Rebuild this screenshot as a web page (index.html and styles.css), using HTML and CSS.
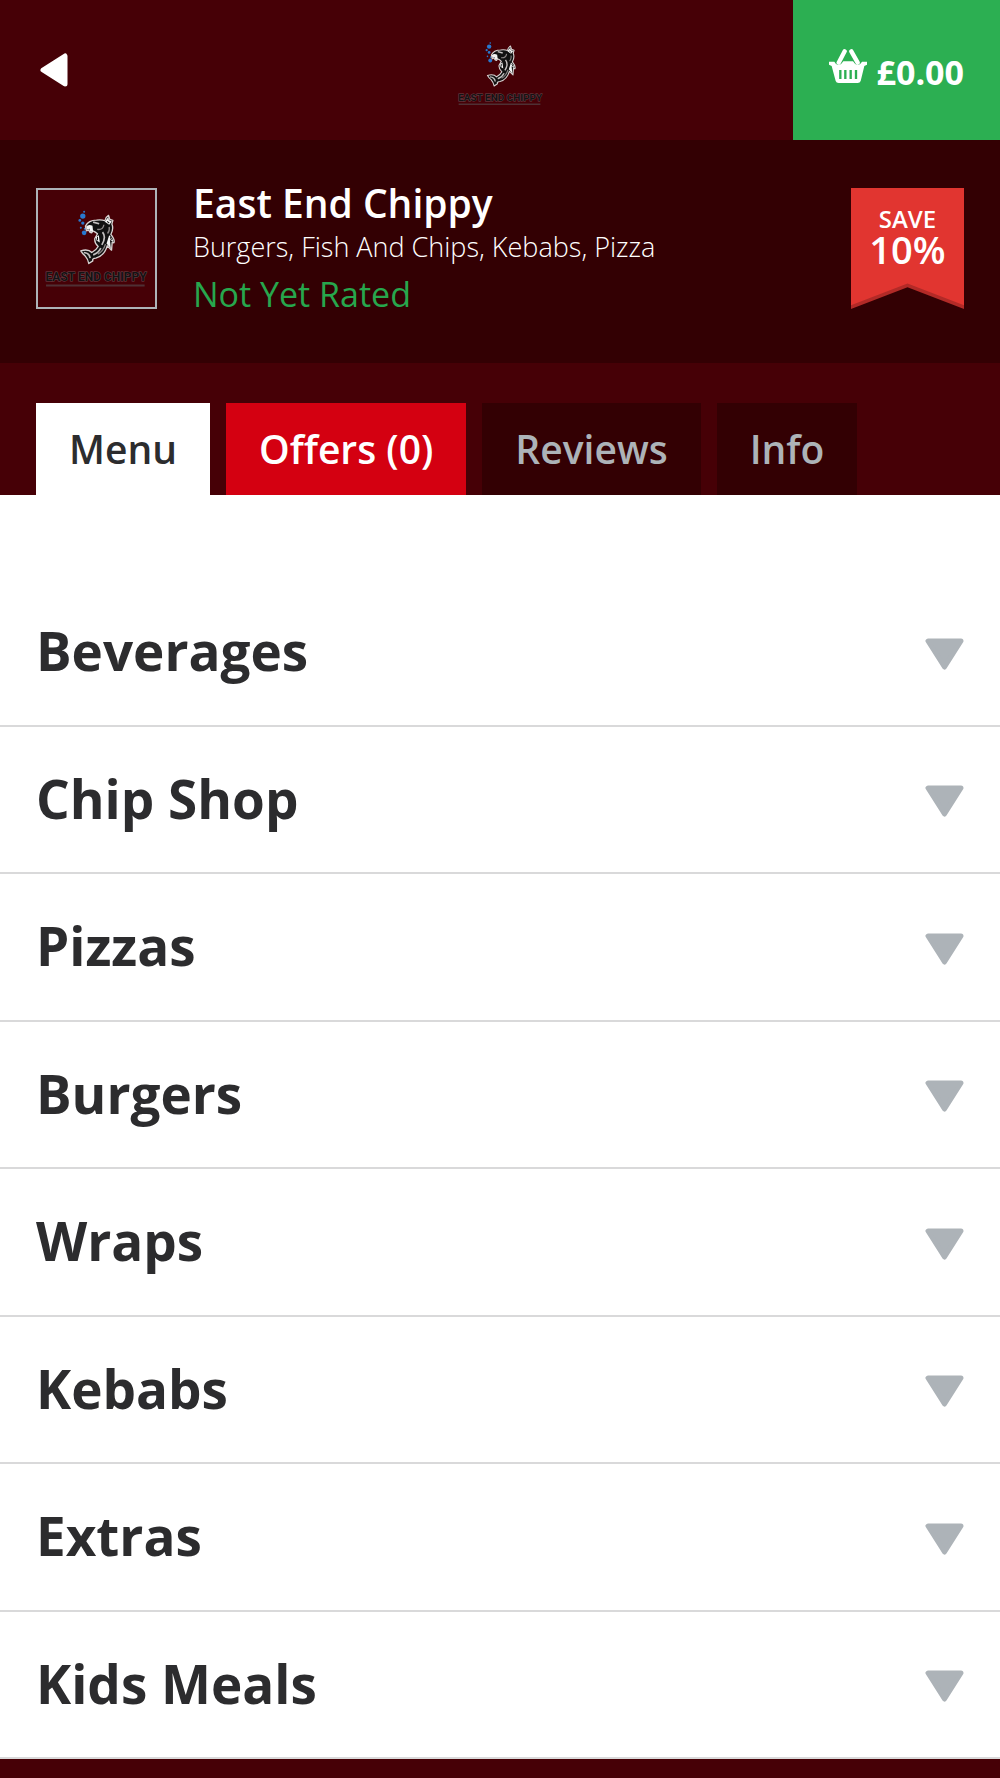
FILE: index.html
```html
<!DOCTYPE html>
<html lang="en">
<head>
    <meta charset="UTF-8">
    <meta name="viewport" content="width=device-width, initial-scale=1.0">
    <title>East End Chippy | Menu</title>
    <link rel="stylesheet" href="styles.css">
</head>
<body>
    <!-- shared shapes -->
    <svg class="sprite" aria-hidden="true">
        <symbol id="logo" viewBox="55 62 350 350">
            <g fill="#2878cf">
                <circle cx="193" cy="127" r="3"/>
                <circle cx="189" cy="140" r="8"/>
                <circle cx="180" cy="153" r="4"/>
                <circle cx="189" cy="161" r="5"/>
                <circle cx="183" cy="175" r="3"/>
                <circle cx="195" cy="178" r="3"/>
                <circle cx="193" cy="190" r="7"/>
            </g>
            <path fill="#111" stroke="#d8d2d2" stroke-width="4" stroke-linejoin="round" d="M197 170 Q206 152 230 152 Q246 150 255 154 Q257 143 266 138 L270 150 L279 153 L276 164 Q282 178 273 195 Q286 211 282 220 L277 218 L275 242 L262 229 Q254 258 228 266 Q216 267 219 274 L207 282 Q204 268 196 259 Q189 254 183 244 Q205 237 216 249 Q229 242 235 231 Q223 220 225 207 L233 193 Q227 187 219 184 L216 190 Q209 190 207 181 L200 184 Z"/>
            <path fill="#f4f4f4" d="M199 171 Q207 163 218 169 L220 186 L211 187 L209 178 L201 181 Z M255 157 Q260 149 266 143 L267 152 L276 156 L268 166 Z M228 202 L237 197 L240 219 L230 213 Z M268 197 Q282 211 279 217 L270 211 L273 238 L260 222 Z"/>
            <path fill="none" stroke="#c4c0c0" stroke-width="5" d="M220 158 L238 163 M248 188 Q260 203 246 226 M243 236 Q235 251 220 256 M192 249 Q209 250 211 266"/>
            <path fill="none" stroke="#8c8686" stroke-width="4" d="M232 180 Q250 182 252 166 M268 172 Q270 184 263 192 M257 224 Q250 246 234 254"/>
            <path fill="none" stroke="#111" stroke-width="3" d="M262 156 L268 161 M233 202 V212 M271 203 L275 212"/>
            <text class="logo-text" x="229" y="335" text-anchor="middle">EAST END CHIPPY</text>
            <path stroke="#4e3034" stroke-width="6" d="M79 348 H374"/>
        </symbol>
        <symbol id="arrow" viewBox="0 0 39 32">
            <path d="M3 3 H36 L19.5 29 Z" fill="currentColor" stroke="currentColor" stroke-width="5" stroke-linejoin="round"/>
        </symbol>
    </svg>

    <header class="topbar">
        <a class="back" href="#" aria-label="Back">
            <svg width="28" height="36" viewBox="0 0 28 36"><path d="M3 18 L25 4 V32 Z" fill="#fff" stroke="#fff" stroke-width="5" stroke-linejoin="round"/></svg>
        </a>
        <a class="brand" href="#" aria-label="East End Chippy home">
            <svg width="97" height="97"><use href="#logo"/></svg>
        </a>
        <button class="basket" type="button">
            <svg width="38" height="34" viewBox="0 0 114 102" aria-hidden="true">
                <path fill="#fff" d="M0 38 H16 Q24 54 37 44 L43 37 H72 L78 44 Q90 54 99 38 H114 V47 L106 51 L95 96 Q93 102 86 102 H29 Q22 102 20 96 L8 51 L0 47 Z"/>
                <path stroke="#fff" stroke-width="13" stroke-linecap="round" d="M47 7 L29 41 M67 7 L86 41"/>
                <path stroke="#2caf52" stroke-width="7" d="M34 63 V90 M49 63 V90 M65 63 V90 M81 63 V90"/>
            </svg>
            <span>£0.00</span>
        </button>
    </header>

    <section class="restaurant">
        <div class="thumb">
            <svg width="117" height="117" role="img" aria-label="East End Chippy logo"><use href="#logo"/></svg>
        </div>
        <div class="details">
            <h1>East End Chippy</h1>
            <p class="cuisines">Burgers, Fish And Chips, Kebabs, Pizza</p>
            <p class="rating">Not Yet Rated</p>
        </div>
        <div class="ribbon">
            <span class="ribbon-label">SAVE</span>
            <span class="ribbon-value">10%</span>
        </div>
    </section>

    <nav class="tabs">
        <a class="tab active" href="#menu">Menu</a>
        <a class="tab offers" href="#offers">Offers (0)</a>
        <a class="tab" href="#reviews">Reviews</a>
        <a class="tab" href="#info">Info</a>
    </nav>

    <main id="menu">
        <ul class="categories">
            <li><button type="button" aria-expanded="false">Beverages <svg width="39" height="32"><use href="#arrow"/></svg></button></li>
            <li><button type="button" aria-expanded="false">Chip Shop <svg width="39" height="32"><use href="#arrow"/></svg></button></li>
            <li><button type="button" aria-expanded="false">Pizzas <svg width="39" height="32"><use href="#arrow"/></svg></button></li>
            <li><button type="button" aria-expanded="false">Burgers <svg width="39" height="32"><use href="#arrow"/></svg></button></li>
            <li><button type="button" aria-expanded="false">Wraps <svg width="39" height="32"><use href="#arrow"/></svg></button></li>
            <li><button type="button" aria-expanded="false">Kebabs <svg width="39" height="32"><use href="#arrow"/></svg></button></li>
            <li><button type="button" aria-expanded="false">Extras <svg width="39" height="32"><use href="#arrow"/></svg></button></li>
            <li><button type="button" aria-expanded="false">Kids Meals <svg width="39" height="32"><use href="#arrow"/></svg></button></li>
        </ul>
    </main>
</body>
</html>
```
FILE: styles.css
```css
* {
    box-sizing: border-box;
    margin: 0;
    padding: 0;
}

body {
    display: flex;
    flex-direction: column;
    min-height: 100vh;
    padding-bottom: 19px;
    background-color: #460006;
    color: #2c2c2e;
    font-family: "Open Sans", sans-serif;
}

a {
    text-decoration: none;
}

button {
    border: none;
    font-family: inherit;
    cursor: pointer;
}

svg {
    display: block;
}

.sprite {
    position: absolute;
    width: 0;
    height: 0;
}

.logo-text {
    font-family: Roboto, sans-serif;
    font-size: 36px;
    font-weight: bold;
    fill: #141214;
    stroke: #6a484e;
    stroke-width: 3px;
    paint-order: stroke;
}

/* top bar */
.topbar {
    display: grid;
    grid-template-columns: 1fr auto 1fr;
    align-items: center;
    height: 140px;
}

.back {
    justify-self: start;
    padding: 16px 40px;
}

.brand {
    padding-top: 6px;
}

.basket {
    display: flex;
    justify-self: end;
    align-items: center;
    gap: 10px;
    height: 100%;
    padding: 0 36px;
    background-color: #2caf52;
    color: #fff;
    font-size: 34px;
    font-weight: 700;
}

.basket svg {
    margin-bottom: 8px;
}

.basket span {
    padding-top: 4px;
}

/* restaurant summary */
.restaurant {
    display: flex;
    align-items: flex-start;
    gap: 36px;
    padding: 48px 36px 51px;
    background-color: #330003;
    color: #fff;
}

.thumb {
    border: 2px solid #adb3b8;
    background-color: #460006;
}

.details {
    flex: 1;
}

h1 {
    font-size: 39px;
    font-weight: 600;
    line-height: 30px;
}

.cuisines {
    font-size: 27px;
    font-weight: 300;
    line-height: 58px;
}

.rating {
    color: #27a74d;
    font-size: 34px;
    line-height: 36px;
}

.ribbon {
    position: relative;
    display: flex;
    flex-direction: column;
    align-items: center;
    width: 113px;
    height: 121px;
    padding-top: 16px;
    background-color: #b22a27;
    clip-path: polygon(0 0, 100% 0, 100% 100%, 50% 82%, 0 100%);
    isolation: isolate;
}

/* front face, leaves the darker fold along the notch */
.ribbon::before {
    content: "";
    position: absolute;
    inset: 0;
    z-index: -1;
    background-color: #e13530;
    clip-path: polygon(0 0, 100% 0, 100% 97%, 50% 79%, 0 97%);
}

.ribbon-label {
    font-size: 24px;
    font-weight: 600;
    line-height: 30px;
}

.ribbon-value {
    font-size: 38px;
    font-weight: 600;
    line-height: 30px;
}

/* tabs */
.tabs {
    display: flex;
    gap: 16px;
    padding: 40px 36px 0;
}

.tab {
    padding: 0 33px;
    background-color: #330003;
    color: #adb3b8;
    font-size: 39px;
    font-weight: 600;
    line-height: 92px;
}

.tab.active {
    background-color: #fff;
    color: #2c2c2e;
}

.tab.offers {
    background-color: #d40011;
    color: #fff;
}

/* menu categories */
main {
    display: flex;
    flex: 1;
    padding-top: 84px;
    background-color: #fff;
}

.categories {
    display: grid;
    flex: 1;
    grid-auto-rows: 1fr;
    list-style: none;
}

.categories li {
    border-bottom: 2px solid #d9d9da;
}

.categories button {
    display: flex;
    justify-content: space-between;
    align-items: center;
    width: 100%;
    height: 100%;
    padding: 22px 36px 24px;
    background: none;
    color: inherit;
    font-size: 53px;
    font-weight: 700;
}

.categories svg {
    margin-top: 6px;
    color: #adb3b8;
}
```
